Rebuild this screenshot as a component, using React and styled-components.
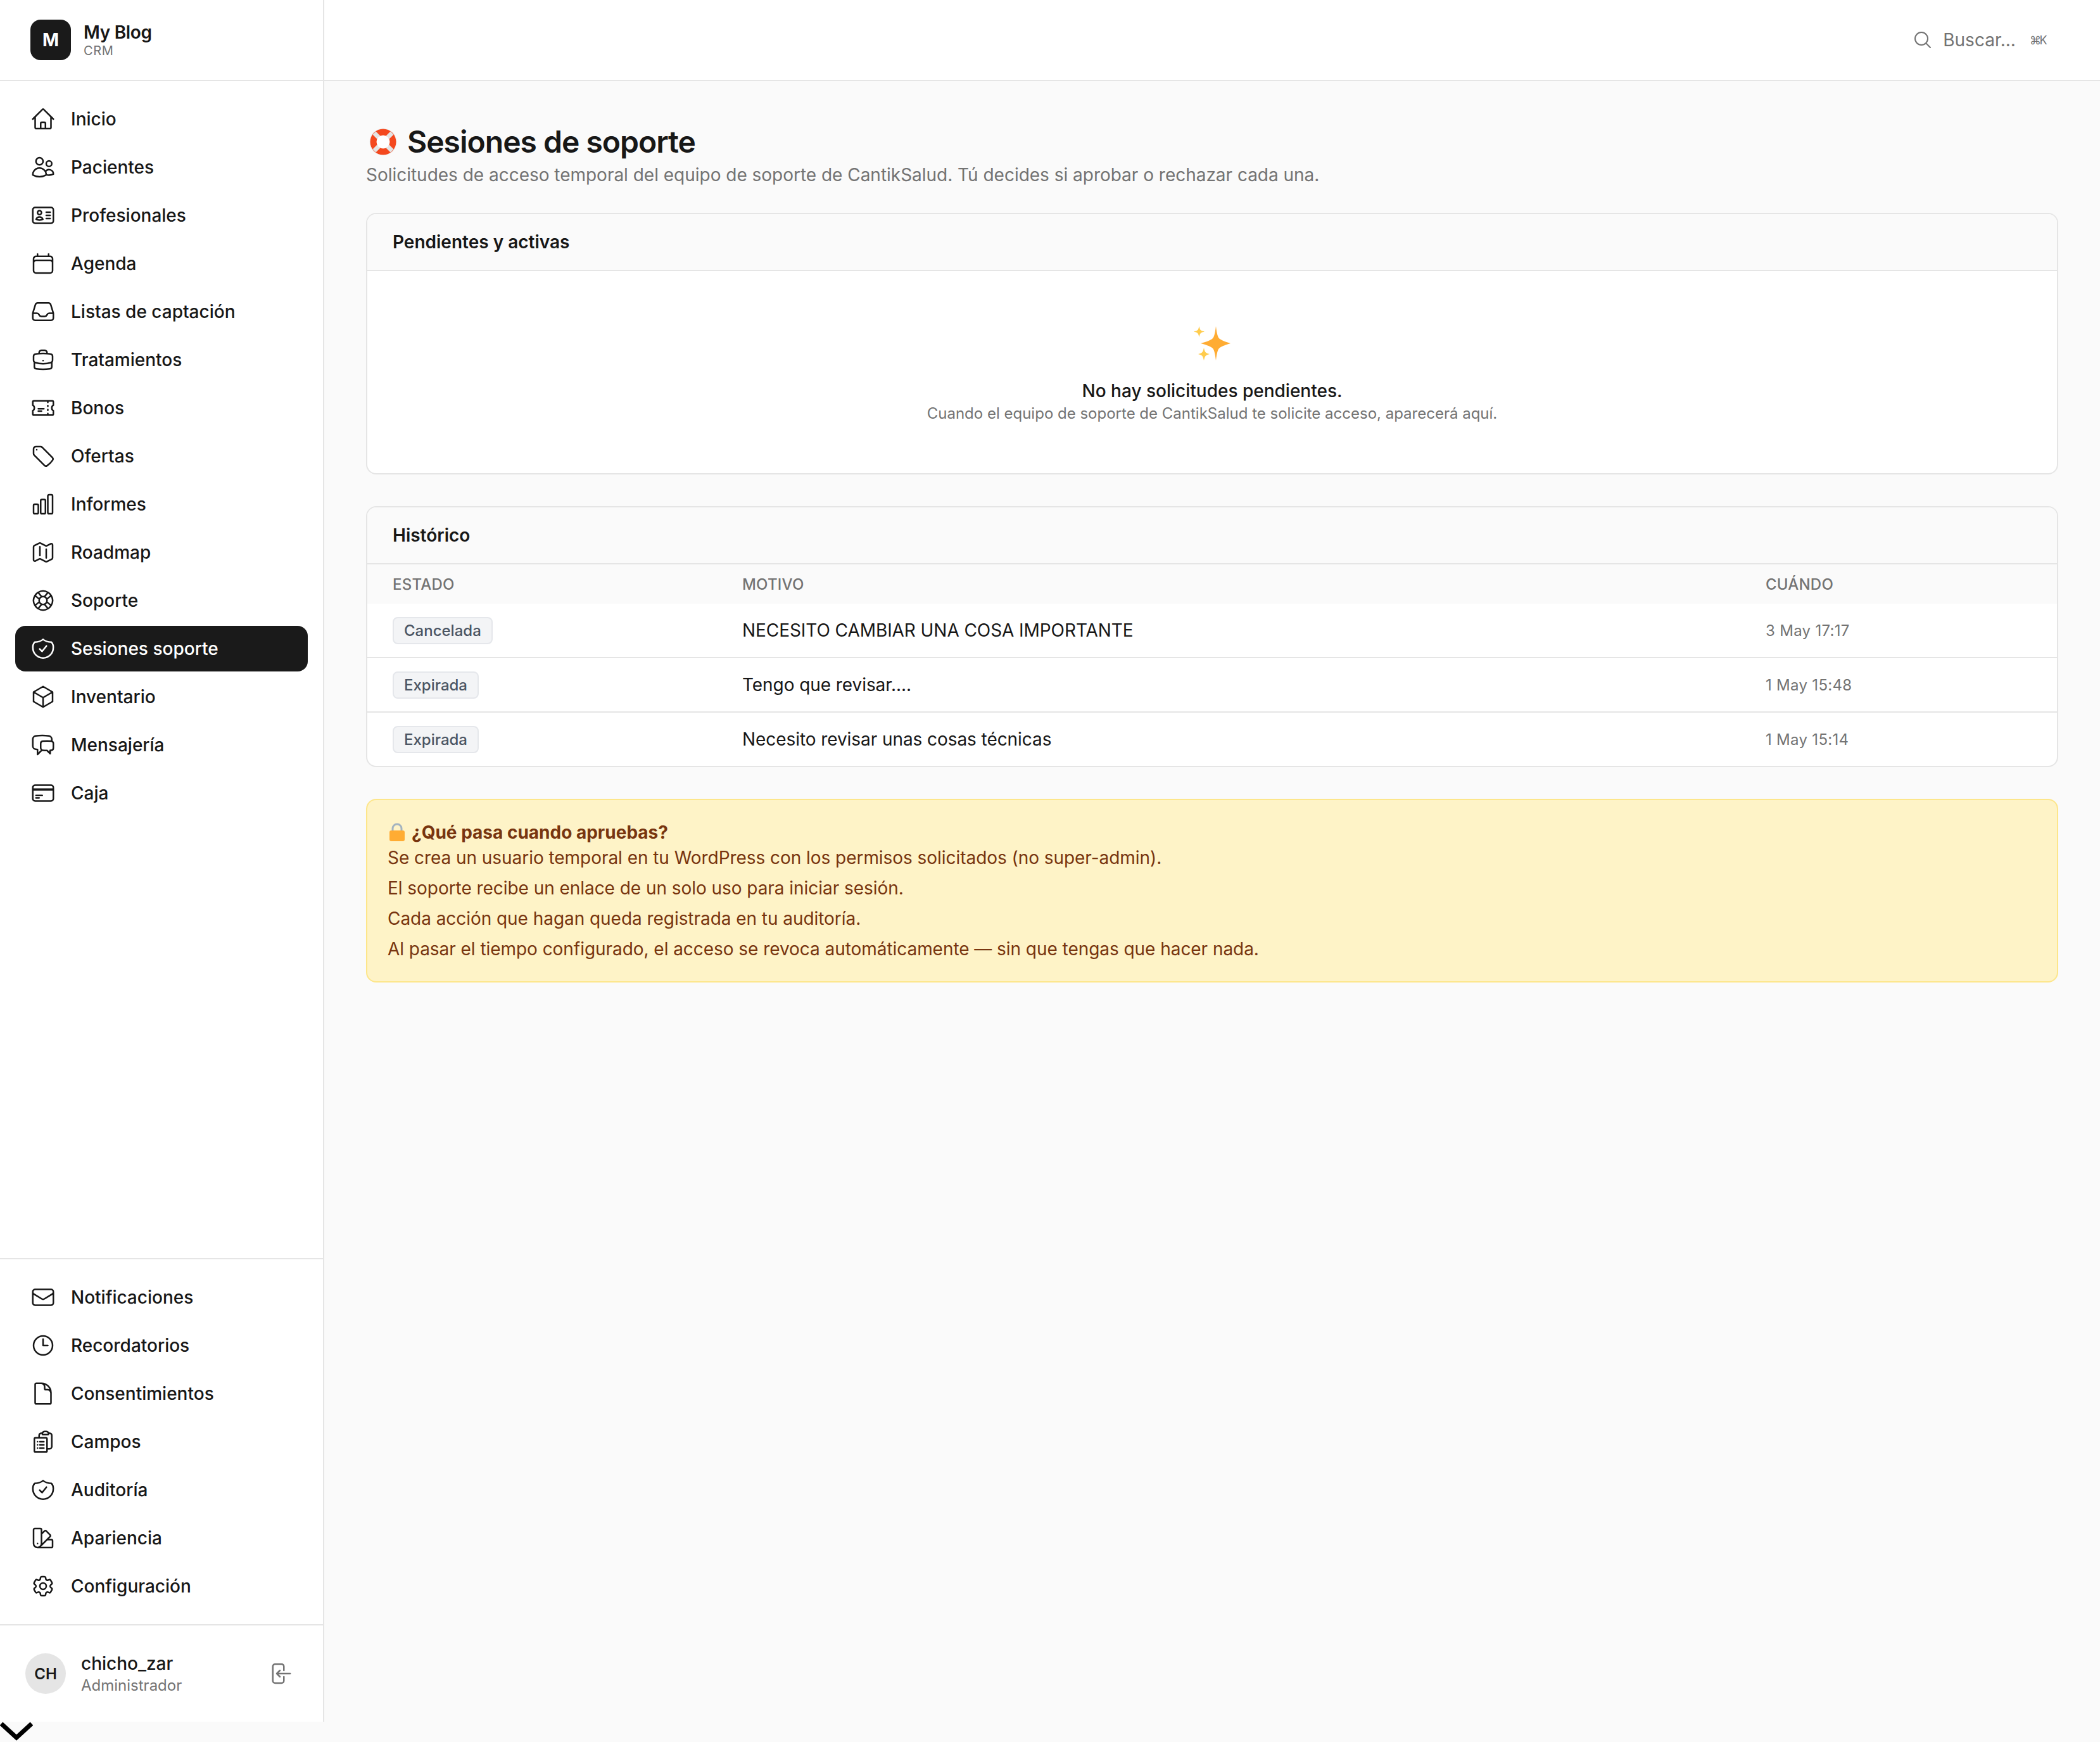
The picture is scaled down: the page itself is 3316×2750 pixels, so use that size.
import React from "react";
import styled, { createGlobalStyle } from "styled-components";
import {
  HiOutlineHome,
  HiOutlineUsers,
  HiOutlineIdentification,
  HiOutlineCalendar,
  HiOutlineInbox,
  HiOutlineBriefcase,
  HiOutlineTicket,
  HiOutlineTag,
  HiOutlineChartBar,
  HiOutlineMap,
  HiOutlineLifebuoy,
  HiOutlineCube,
  HiOutlineChatBubbleLeftRight,
  HiOutlineCreditCard,
  HiOutlineEnvelope,
  HiOutlineClock,
  HiOutlineDocument,
  HiOutlineClipboardDocumentList,
  HiOutlineSwatch,
  HiOutlineCog6Tooth,
  HiOutlineArrowLeftOnRectangle,
  HiOutlineMagnifyingGlass,
} from "react-icons/hi2";

// the shield in the app is rounder than the heroicons one
function ShieldIcon({ size }) {
  return (
    <svg viewBox="0 0 24 24" width={size} height={size} fill="none" stroke="currentColor" strokeWidth="1.5" strokeLinecap="round" strokeLinejoin="round">
      <path d="M12 3.2C14 4.9 17 5.7 20 5.9C21.1 7.1 21.7 9 21.7 10.6C21.7 17 17 20.8 12 20.8C7 20.8 2.3 17 2.3 10.6C2.3 9 2.9 7.1 4 5.9C7 5.7 10 4.9 12 3.2Z" />
      <path d="M8.8 12.3L11.1 14.6L15.2 9.4" />
    </svg>
  );
}

const mainNav = [
  ["Inicio", HiOutlineHome],
  ["Pacientes", HiOutlineUsers],
  ["Profesionales", HiOutlineIdentification],
  ["Agenda", HiOutlineCalendar],
  ["Listas de captación", HiOutlineInbox],
  ["Tratamientos", HiOutlineBriefcase],
  ["Bonos", HiOutlineTicket],
  ["Ofertas", HiOutlineTag],
  ["Informes", HiOutlineChartBar],
  ["Roadmap", HiOutlineMap],
  ["Soporte", HiOutlineLifebuoy],
  ["Sesiones soporte", ShieldIcon],
  ["Inventario", HiOutlineCube],
  ["Mensajería", HiOutlineChatBubbleLeftRight],
  ["Caja", HiOutlineCreditCard],
];

const bottomNav = [
  ["Notificaciones", HiOutlineEnvelope],
  ["Recordatorios", HiOutlineClock],
  ["Consentimientos", HiOutlineDocument],
  ["Campos", HiOutlineClipboardDocumentList],
  ["Auditoría", ShieldIcon],
  ["Apariencia", HiOutlineSwatch],
  ["Configuración", HiOutlineCog6Tooth],
];

const history = [
  { status: "Cancelada", reason: "NECESITO CAMBIAR UNA COSA IMPORTANTE", when: "3 May 17:17" },
  { status: "Expirada", reason: "Tengo que revisar....", when: "1 May 15:48" },
  { status: "Expirada", reason: "Necesito revisar unas cosas técnicas", when: "1 May 15:14" },
];

const notes = [
  "Se crea un usuario temporal en tu WordPress con los permisos solicitados (no super-admin).",
  "El soporte recibe un enlace de un solo uso para iniciar sesión.",
  "Cada acción que hagan queda registrada en tu auditoría.",
  "Al pasar el tiempo configurado, el acceso se revoca automáticamente — sin que tengas que hacer nada.",
];

function LifebuoyEmoji() {
  return (
    <TitleEmoji viewBox="0 0 44 46" width="44" height="46">
      <circle cx="22" cy="23" r="21.5" fill="#efefef" />
      <circle cx="22" cy="23" r="20.5" fill="#f4481e" />
      <g stroke="#e4e4e4" strokeWidth="7">
        <line x1="8" y1="9" x2="15" y2="16" />
        <line x1="36" y1="9" x2="29" y2="16" />
        <line x1="8" y1="37" x2="15" y2="30" />
        <line x1="36" y1="37" x2="29" y2="30" />
      </g>
      <circle cx="22" cy="23" r="10.5" fill="#fff" />
    </TitleEmoji>
  );
}

function Sparkles() {
  return (
    <svg viewBox="0 0 58 56" width="58" height="56">
      <path d="M35 1C36.5 13 38 19 41 21C45 24 52 26 58 28C52 30 45 32 41 35C38 37 36.5 43 35 55C33.5 43 32 37 29 35C25 32 18 30 11 28C18 26 25 24 29 21C32 19 33.5 13 35 1Z" fill="#ffac33" />
      <path d="M8.5 1C9.5 5 10 6.5 11.5 7.5C13 8.5 15 9 17 9.5C15 10 13 10.5 11.5 11.5C10 12.5 9.5 14 8.5 18C7.5 14 7 12.5 5.5 11.5C4 10.5 2 10 0 9.5C2 9 4 8.5 5.5 7.5C7 6.5 7.5 5 8.5 1Z" fill="#ffcc4d" />
      <path d="M16 35C17 39 17.5 41 19 42.5C20.5 43.5 23 44.5 25 45C23 45.5 20.5 46.5 19 47.5C17.5 49 17 51 16 55C15 51 14.5 49 13 47.5C11.5 46.5 9 45.5 7 45C9 44.5 11.5 43.5 13 42.5C14.5 41 15 39 16 35Z" fill="#ffcc4d" />
    </svg>
  );
}

function LockEmoji() {
  return (
    <svg viewBox="0 0 24 30" width="24" height="30">
      <path d="M5 14V9a7 7 0 0 1 14 0v5" fill="none" stroke="#a3b3c0" strokeWidth="3" />
      <rect x="0" y="12" width="24" height="17" rx="3" fill="#ffac33" />
    </svg>
  );
}

export default function App() {
  return (
    <Page>
      <GlobalStyle />
      <Shell>
        <Sidebar>
          <Brand>
            <BrandMark>M</BrandMark>
            <div>
              <BrandName>My Blog</BrandName>
              <BrandSub>CRM</BrandSub>
            </div>
          </Brand>
          <Nav>
            {mainNav.map(([label, Icon]) => (
              <NavRow key={label} $active={label === "Sesiones soporte"}>
                <Icon size={40} />
                {label}
              </NavRow>
            ))}
          </Nav>
          <BottomNav>
            {bottomNav.map(([label, Icon]) => (
              <NavRow key={label}>
                <Icon size={40} />
                {label}
              </NavRow>
            ))}
          </BottomNav>
          <UserBar>
            <Avatar>CH</Avatar>
            <UserInfo>
              <UserName>chicho_zar</UserName>
              <UserRole>Administrador</UserRole>
            </UserInfo>
            <LogoutButton>
              <HiOutlineArrowLeftOnRectangle size={40} />
            </LogoutButton>
          </UserBar>
        </Sidebar>
        <Main>
          <Topbar>
            <SearchBox>
              <HiOutlineMagnifyingGlass size={32} />
              <span>Buscar...</span>
              <Kbd>⌘K</Kbd>
            </SearchBox>
          </Topbar>
          <Content>
            <Title>
              <LifebuoyEmoji />
              Sesiones de soporte
            </Title>
            <Subtitle>
              Solicitudes de acceso temporal del equipo de soporte de CantikSalud. Tú decides si aprobar o rechazar cada una.
            </Subtitle>

            <Card>
              <CardHeader>Pendientes y activas</CardHeader>
              <EmptyState>
                <Sparkles />
                <EmptyTitle>No hay solicitudes pendientes.</EmptyTitle>
                <EmptyText>Cuando el equipo de soporte de CantikSalud te solicite acceso, aparecerá aquí.</EmptyText>
              </EmptyState>
            </Card>

            <Card>
              <CardHeader>Histórico</CardHeader>
              <TableHead>
                <span>Estado</span>
                <span>Motivo</span>
                <span>Cuándo</span>
              </TableHead>
              {history.map((row) => (
                <TableRow key={row.when}>
                  <div>
                    <Badge>{row.status}</Badge>
                  </div>
                  <span>{row.reason}</span>
                  <When>{row.when}</When>
                </TableRow>
              ))}
            </Card>

            <Notice>
              <NoticeTitle>
                <LockEmoji />
                ¿Qué pasa cuando apruebas?
              </NoticeTitle>
              {notes.map((note) => (
                <NoticeLine key={note}>{note}</NoticeLine>
              ))}
            </Notice>
          </Content>
        </Main>
      </Shell>
      <BottomStrip>
        <svg viewBox="0 0 52 32" width="52" height="32">
          <polyline points="2,3 26,25 50,3" fill="none" stroke="#000" strokeWidth="7" />
        </svg>
      </BottomStrip>
    </Page>
  );
}

const GlobalStyle = createGlobalStyle`
  html, body {
    margin: 0;
    background: #fafafa;
    font-family: Inter, "Liberation Sans", sans-serif;
    color: #171717;
  }
  * {
    box-sizing: border-box;
  }
`;

const Page = styled.div`
  width: 3316px;
  height: 2750px;
  display: flex;
  flex-direction: column;
  overflow: hidden;
`;

const Shell = styled.div`
  height: 2718px;
  display: flex;
`;

const Sidebar = styled.aside`
  width: 512px;
  flex-shrink: 0;
  display: flex;
  flex-direction: column;
  background: #fff;
  border-right: 2px solid #e5e5e5;
`;

const Brand = styled.div`
  height: 128px;
  flex-shrink: 0;
  display: flex;
  align-items: center;
  gap: 20px;
  padding: 0 48px;
  border-bottom: 2px solid #e5e5e5;
`;

const BrandMark = styled.div`
  width: 64px;
  height: 64px;
  border-radius: 16px;
  background: #1a1a1a;
  color: #fff;
  font-size: 28px;
  font-weight: 700;
  display: flex;
  align-items: center;
  justify-content: center;
`;

const BrandName = styled.div`
  font-size: 28px;
  line-height: 34px;
  font-weight: 600;
  letter-spacing: -0.3px;
`;

const BrandSub = styled.div`
  font-size: 20px;
  line-height: 24px;
  letter-spacing: 0.6px;
  color: #737373;
`;

const Nav = styled.nav`
  flex: 1;
  display: flex;
  flex-direction: column;
  gap: 4px;
  padding: 24px 24px 0;
`;

const BottomNav = styled(Nav)`
  flex: none;
  padding: 24px;
  border-top: 2px solid #e5e5e5;
`;

const NavRow = styled.div`
  height: 72px;
  flex-shrink: 0;
  display: flex;
  align-items: center;
  gap: 24px;
  padding: 0 24px;
  border-radius: 16px;
  font-size: 28px;
  font-weight: 500;
  color: ${(p) => (p.$active ? "#fff" : "#171717")};
  background: ${(p) => (p.$active ? "#1a1a1a" : "transparent")};

  svg {
    flex-shrink: 0;
  }
`;

const UserBar = styled.div`
  height: 154px;
  flex-shrink: 0;
  display: flex;
  align-items: center;
  gap: 24px;
  padding: 0 48px 0 40px;
  border-top: 2px solid #e5e5e5;
`;

const Avatar = styled.div`
  width: 64px;
  height: 64px;
  border-radius: 50%;
  background: #e5e5e5;
  font-size: 24px;
  font-weight: 600;
  display: flex;
  align-items: center;
  justify-content: center;
`;

const UserInfo = styled.div`
  flex: 1;
`;

const UserName = styled.div`
  font-size: 28px;
  line-height: 38px;
  font-weight: 500;
`;

const UserRole = styled.div`
  font-size: 24px;
  line-height: 32px;
  color: #737373;
`;

const LogoutButton = styled.div`
  display: flex;
  color: #737373;
`;

const Main = styled.main`
  flex: 1;
  display: flex;
  flex-direction: column;
`;

const Topbar = styled.header`
  height: 128px;
  flex-shrink: 0;
  display: flex;
  align-items: center;
  justify-content: flex-end;
  padding: 0 86px 0 0;
  background: #fff;
  border-bottom: 2px solid #e5e5e5;
`;

const SearchBox = styled.div`
  display: flex;
  align-items: center;
  gap: 16px;
  font-size: 28px;
  color: #737373;
`;

const Kbd = styled.span`
  margin-left: 6px;
  font-size: 18px;
  letter-spacing: -2.5px;
`;

const Content = styled.div`
  padding: 66px 66px 0;
  display: flex;
  flex-direction: column;
`;

const Title = styled.h1`
  margin: 0;
  display: flex;
  align-items: center;
  gap: 16px;
  font-size: 48px;
  line-height: 60px;
  font-weight: 600;
  letter-spacing: -1px;
`;

const TitleEmoji = styled.svg`
  flex-shrink: 0;
  margin-left: 5px;
`;

const Subtitle = styled.p`
  margin: 0 0 38px;
  font-size: 28px;
  line-height: 44px;
  letter-spacing: -0.02px;
  color: #737373;
`;

const Card = styled.section`
  background: #fff;
  border: 2px solid #e5e5e5;
  border-radius: 16px;
  overflow: hidden;
  margin-bottom: 50px;
`;

const CardHeader = styled.div`
  height: 90px;
  display: flex;
  align-items: center;
  padding: 0 40px;
  background: #fafafa;
  border-bottom: 2px solid #e5e5e5;
  font-size: 28px;
  font-weight: 600;
`;

const EmptyState = styled.div`
  display: flex;
  flex-direction: column;
  align-items: center;
  padding: 86px 0 76px;

  svg {
    margin-bottom: 29px;
  }
`;

const EmptyTitle = styled.div`
  font-size: 28px;
  line-height: 36px;
  font-weight: 500;
`;

const EmptyText = styled.div`
  font-size: 24px;
  line-height: 36px;
  color: #737373;
`;

const rowGrid = `
  display: grid;
  grid-template-columns: 552px 1616px 1fr;
  align-items: center;
  padding: 0 40px;
`;

const TableHead = styled.div`
  ${rowGrid}
  height: 62px;
  background: #fafafa;
  font-size: 24px;
  font-weight: 500;
  letter-spacing: 0.2px;
  text-transform: uppercase;
  color: #737373;
`;

const TableRow = styled.div`
  ${rowGrid}
  height: 86px;
  font-size: 28px;
  letter-spacing: -0.07px;
  border-bottom: 2px solid #e5e5e5;

  &:last-child {
    height: 84px;
    border-bottom: 0;
  }
`;

const Badge = styled.span`
  display: inline-block;
  padding: 0 16px;
  height: 43px;
  line-height: 39px;
  font-size: 24px;
  font-weight: 500;
  letter-spacing: 0;
  color: #4b5563;
  background: #f3f4f6;
  border: 2px solid #e5e7eb;
  border-radius: 8px;
`;

const When = styled.span`
  font-size: 24px;
  letter-spacing: 0.3px;
  color: #737373;
`;

const Notice = styled.section`
  height: 290px;
  padding: 35px 32px;
  background: #fef3c7;
  border: 2px solid #fde68a;
  border-radius: 16px;
  color: #78350f;
  font-size: 28px;
`;

const NoticeTitle = styled.div`
  display: flex;
  align-items: center;
  gap: 11px;
  height: 32px;
  padding-left: 3px;
  font-weight: 700;
`;

const NoticeLine = styled.div`
  line-height: 48px;
  letter-spacing: -0.05px;
`;

const BottomStrip = styled.div`
  flex: 1;
  display: flex;
  align-items: flex-start;
`;
